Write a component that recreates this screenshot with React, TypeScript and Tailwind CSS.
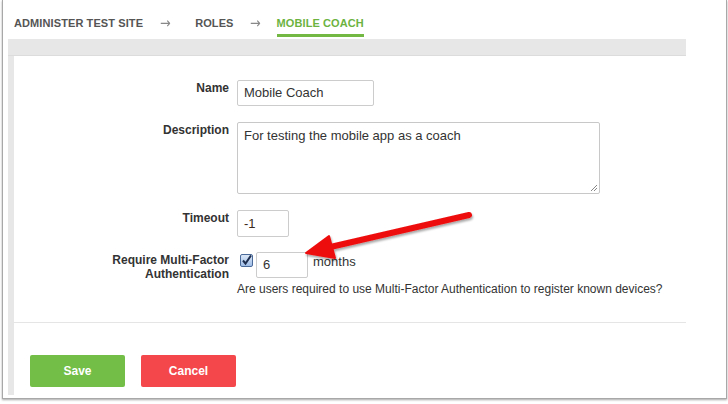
import React from 'react'

const font = { fontFamily: '"Liberation Sans", Arial, sans-serif' }

function Row({ label, children, top = 'pt-[5px]' }: { label: React.ReactNode; children: React.ReactNode; top?: string }) {
  return (
    <div className="flex">
      <div className={`w-[215px] text-right text-[12px] leading-[14px] font-bold text-[#333] ${top}`}>{label}</div>
      <div className="ml-[8px] flex-1">{children}</div>
    </div>
  )
}

function Arrow({ ml }: { ml: string }) {
  return (
    <span className={`pt-[12px] ${ml} inline-block w-[12px] text-center text-[15px] font-normal text-[#888]`} style={{ fontFamily: '"DejaVu Sans", sans-serif', transform: 'scaleX(0.85)' }}>
      →
    </span>
  )
}

export default function App() {
  return (
    <div className="w-[728px] h-[404px] bg-white overflow-hidden relative" style={font}>
      <div className="ml-[2px] w-[725px] h-[399px] border-x border-b border-[#a8a8a8] shadow-[0_1px_2px_rgba(0,0,0,0.35)] flex flex-col">
        {/* breadcrumb */}
        <div className="h-[37px] flex items-start pl-[11px] text-[11px] font-bold text-[#555] tracking-[0.1px]">
          <span className="pt-[15px]">ADMINISTER TEST SITE</span>
          <Arrow ml="ml-[16px]" />
          <span className="pt-[15px] ml-[24px]">ROLES</span>
          <Arrow ml="ml-[15px]" />
          <span className="pt-[15px] ml-[16px] h-[37px] border-b-[3px] border-[#72b843] text-[#6cb33f]">MOBILE COACH</span>
        </div>

        {/* panel */}
        <div className="ml-[5px] w-[678px] flex-1 flex flex-col mt-[2px]">
          <div className="h-[17px] bg-[#e7e7e7] border-b border-[#dcdcdc]" />
          <div className="flex flex-1">
            <div className="w-[6px] bg-[#e7e7e7] mb-[3px]" />
            <div className="flex-1 bg-white flex flex-col">
              <div className="pt-[24px] flex flex-col text-[13px] text-[#333]">
                <Row label="Name" top="pt-[1px]">
                  <div className="w-[137px] h-[26px] border border-[#ccc] rounded-[2px] px-[6px] flex items-center">Mobile Coach</div>
                </Row>
                <div className="h-[16px]" />
                <Row label="Description" top="pt-[1px]">
                  <div className="w-[363px] h-[72px] border border-[#c8c8c8] rounded-[2px] px-[6px] pt-[3px] relative">
                    For testing the mobile app as a coach
                    <svg className="absolute right-[1px] bottom-[1px]" width="8" height="8" viewBox="0 0 8 8">
                      <path d="M7 1L1 7M7 4L4 7" stroke="#888" strokeWidth="1" />
                    </svg>
                  </div>
                </Row>
                <div className="h-[16px]" />
                <Row label="Timeout" top="pt-[1px]">
                  <div className="w-[52px] h-[27px] border border-[#ccc] rounded-[2px] px-[6px] flex items-center text-[#3a2a20]">-1</div>
                </Row>
                <div className="h-[15px]" />
                <Row label={<>Require Multi-Factor<br />Authentication</>} top="pt-[1px]">
                  <div className="flex items-start">
                    <div className="mt-[2px] ml-[3px] w-[13px] h-[13px] rounded-[2px] border border-[#4a6a9a] bg-gradient-to-b from-[#dbe7f7] to-[#9fbde6] flex items-center justify-center">
                      <svg width="11" height="11" viewBox="0 0 11 11">
                        <path d="M2 5.5L4.5 8.5L10 0.5" stroke="#1e2e4e" strokeWidth="2" fill="none" />
                      </svg>
                    </div>
                    <div className="ml-[3px] w-[52px] h-[26px] border border-[#ccc] rounded-[2px] px-[6px] flex items-center">6</div>
                    <span className="ml-[5px] pt-[0px] text-[13px]">months</span>
                  </div>
                  <div className="mt-[2px] text-[12px] text-[#333]">Are users required to use Multi-Factor Authentication to register known devices?</div>
                </Row>
              </div>
              <div className="mt-[24px] border-t border-[#e5e5e5]" />
              <div className="flex gap-[16px] pl-[16px] pt-[32px]">
                <button className="w-[95px] h-[32px] rounded-[2px] bg-[#72be46] text-white text-[12px] font-bold">Save</button>
                <button className="w-[95px] h-[32px] rounded-[2px] bg-[#f4474b] text-white text-[12px] font-bold">Cancel</button>
              </div>
            </div>
          </div>
        </div>
      </div>

      {/* red annotation arrow */}
      <svg className="absolute left-0 top-0 pointer-events-none" width="728" height="404" viewBox="0 0 728 404">
        <defs>
          <filter id="sh" x="-10%" y="-10%" width="130%" height="150%">
            <feDropShadow dx="1" dy="2" stdDeviation="1.2" floodColor="#000" floodOpacity="0.35" />
          </filter>
        </defs>
        <g filter="url(#sh)">
          <path d="M469 215L326 248" stroke="#ee1010" strokeWidth="6" strokeLinecap="round" />
          <path d="M306 253L329 236L335 258Z" fill="#ee1010" stroke="#ee1010" strokeWidth="2" strokeLinejoin="round" />
        </g>
      </svg>
    </div>
  )
}
